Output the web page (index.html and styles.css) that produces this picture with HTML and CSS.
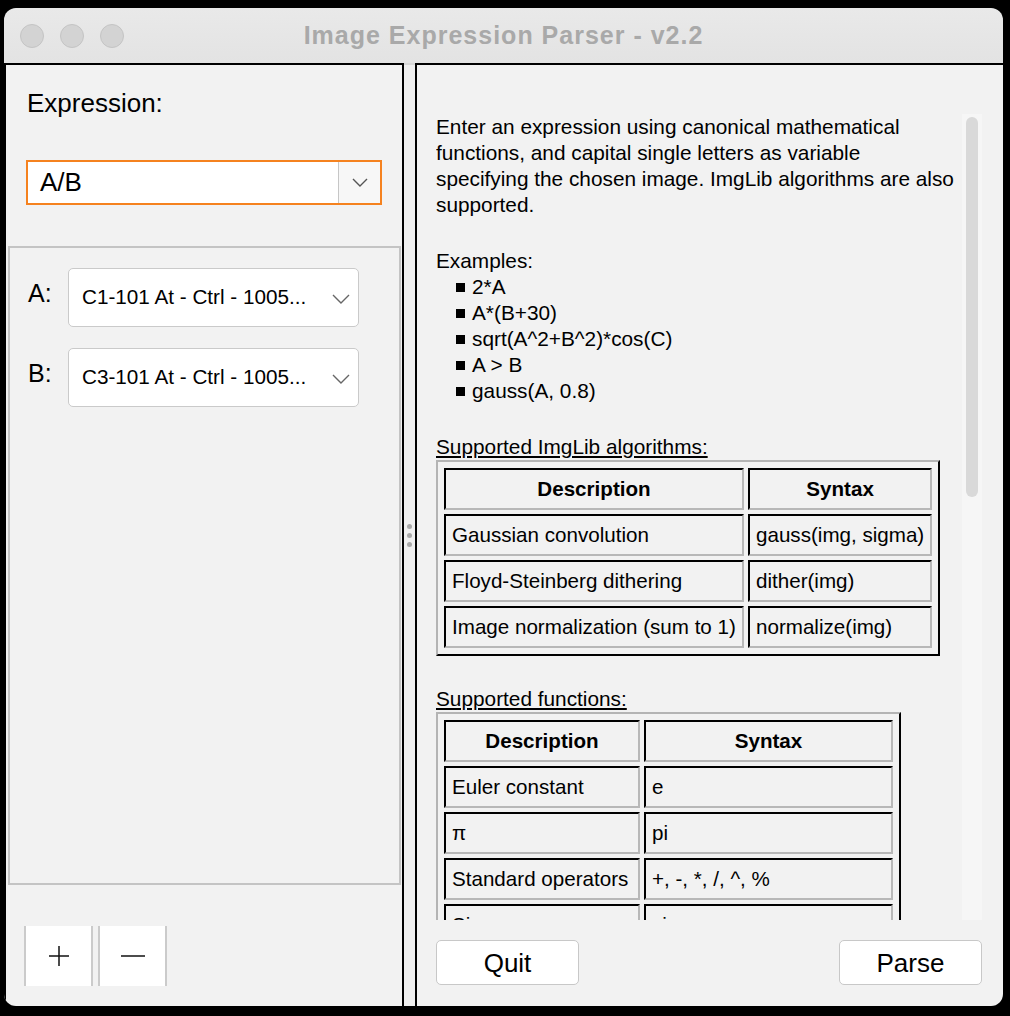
FILE: index.html
```html
<!DOCTYPE html>
<html>
<head>
<meta charset="utf-8">
<link rel="stylesheet" href="styles.css">
</head>
<body>
<div class="window">
  <div class="titlebar">
    <div class="lights"><span class="light"></span><span class="light"></span><span class="light"></span></div>
    <div class="title">Image Expression Parser - v2.2</div>
    <div></div>
  </div>
  <div class="main">
    <div class="left">
      <div class="expr-label">Expression:</div>
      <div class="expr-combo">
        <div class="expr-value">A/B</div>
        <div class="expr-arrow"><svg width="16" height="9" viewBox="0 0 16 9"><polyline points="1,1 8,8 15,1" fill="none" stroke="#555" stroke-width="1.4"/></svg></div>
      </div>
      <div class="vars">
        <div class="var-row">
          <div class="var-label">A:</div>
          <div class="select"><span>C1-101 At - Ctrl - 1005...</span><svg width="18" height="10" viewBox="0 0 18 10"><polyline points="1,1 9,9 17,1" fill="none" stroke="#666" stroke-width="1.4"/></svg></div>
        </div>
        <div class="var-row">
          <div class="var-label">B:</div>
          <div class="select"><span>C3-101 At - Ctrl - 1005...</span><svg width="18" height="10" viewBox="0 0 18 10"><polyline points="1,1 9,9 17,1" fill="none" stroke="#666" stroke-width="1.4"/></svg></div>
        </div>
      </div>
      <div class="pm">
        <button class="pm-btn"><svg width="22" height="22" viewBox="0 0 22 22"><line x1="11" y1="1" x2="11" y2="21" stroke="#111" stroke-width="1.5"/><line x1="1" y1="11" x2="21" y2="11" stroke="#111" stroke-width="1.5"/></svg></button>
        <button class="pm-btn"><svg width="26" height="4" viewBox="0 0 26 4"><line x1="1" y1="2" x2="25" y2="2" stroke="#111" stroke-width="1.5"/></svg></button>
      </div>
    </div>
    <div class="splitter"><span class="dot"></span><span class="dot"></span><span class="dot"></span></div>
    <div class="right">
      <div class="viewport">
        <div class="doc">
          <p class="intro">Enter an expression using canonical mathematical<br>functions, and capital single letters as variable<br>specifying the chosen image. ImgLib algorithms are also<br>supported.</p>
          <p class="para">Examples:</p>
          <ul class="examples">
            <li>2*A</li>
            <li>A*(B+30)</li>
            <li>sqrt(A^2+B^2)*cos(C)</li>
            <li>A &gt; B</li>
            <li>gauss(A, 0.8)</li>
          </ul>
          <p class="section-title">Supported ImgLib algorithms:</p>
          <table class="grid grid-algos">
            <tr><th class="c1">Description</th><th class="c2">Syntax</th></tr>
            <tr><td>Gaussian convolution</td><td>gauss(img, sigma)</td></tr>
            <tr><td>Floyd-Steinberg dithering</td><td>dither(img)</td></tr>
            <tr><td>Image normalization (sum to 1)</td><td>normalize(img)</td></tr>
          </table>
          <p class="section-title">Supported functions:</p>
          <table class="grid grid-funcs">
            <tr><th class="c1">Description</th><th class="c2">Syntax</th></tr>
            <tr><td>Euler constant</td><td>e</td></tr>
            <tr><td>π</td><td>pi</td></tr>
            <tr><td>Standard operators</td><td>+, -, *, /, ^, %</td></tr>
            <tr><td>Sine</td><td>sin</td></tr>
          </table>
        </div>
        <div class="track"><div class="thumb"></div></div>
      </div>
      <div class="actions">
        <button class="btn">Quit</button>
        <button class="btn">Parse</button>
      </div>
    </div>
  </div>
</div>
</body>
</html>
```
FILE: styles.css
```css
* { box-sizing: border-box; }
html, body { margin: 0; padding: 0; background: #000; }
body { font-family: "Liberation Sans", Arial, sans-serif; color: #000; }

.window {
  margin: 8px 0 0 4px;
  width: 999px;
  height: 998px;
  border-radius: 12px;
  overflow: hidden;
  background: #000;
  display: flex;
  flex-direction: column;
}

.titlebar {
  height: 55px;
  flex: none;
  background: linear-gradient(#e9e9e9, #e3e3e3);
  display: grid;
  grid-template-columns: 1fr auto 1fr;
  align-items: center;
}
.lights { display: flex; gap: 16px; padding-left: 16px; }
.light {
  width: 24px; height: 24px; border-radius: 50%;
  background: #d3d3d3; border: 1px solid #c4c4c4;
}
.title {
  font-size: 25px; font-weight: bold; color: #a9a9a9;
  letter-spacing: 1px;
}

.main { flex: 1; display: flex; min-height: 0; }

.left {
  width: 400px; flex: none;
  background: #f2f2f2;
  border-left: 2px solid #000;
  border-top: 2px solid #000;
  border-right: 2px solid #000;
  padding-top: 23px;
  display: flex; flex-direction: column;
}
.expr-label { font-size: 26px; line-height: 30px; margin-left: 21px; }
.expr-combo {
  margin: 42px 20px 0 20px;
  height: 45px;
  border: 2px solid #f5821f;
  display: flex;
  background: #fff;
}
.expr-value { flex: 1; font-size: 26px; line-height: 41px; padding-left: 12px; }
.expr-arrow {
  width: 42px; border-left: 1px solid #c6c6c6; background: #f7f7f7;
  display: flex; align-items: center; justify-content: center;
}

.vars {
  margin: 41px 1px 0 2px;
  height: 639px;
  border: 2px solid #c4c4c4;
  padding: 20px 0 0 18px;
}
.var-row { display: flex; height: 59px; }
.var-row + .var-row { margin-top: 21px; }
.var-label { width: 40px; font-size: 25px; line-height: 30px; margin-top: 10px; }
.select {
  width: 291px; height: 59px;
  border: 1px solid #cacaca; border-radius: 5px; background: #fff;
  display: flex; align-items: center; justify-content: space-between;
  padding: 0 8px 1px 13px;
  font-size: 20.7px;
}
.select svg { margin-top: 3px; }

.pm { margin: 41px 0 0 18px; display: flex; gap: 5px; }
.pm-btn {
  width: 69px; height: 60px; padding: 0;
  background: #fff; border: none;
  border-left: 2px solid #cbcbcb; border-right: 2px solid #cbcbcb;
  display: flex; align-items: center; justify-content: center;
}

.splitter {
  width: 11px; flex: none;
  background: #efefef;
  border-top: 2px solid #d6d6d6;
  display: flex; flex-direction: column; align-items: center; justify-content: center;
  gap: 4px;
}
.dot { width: 5px; height: 5px; border-radius: 50%; background: #a8a8a8; }

.right {
  flex: 1;
  background: #f2f2f2;
  border-left: 2px solid #000;
  border-top: 2px solid #000;
  padding: 49px 21px 0 19px;
}
.viewport { height: 806px; display: flex; }
.doc {
  width: 526px; overflow: hidden;
  font-size: 20.8px; line-height: 26px;
}
.track { width: 20px; background: #f6f6f6; padding: 3px 4px 0 4px; }
.thumb { height: 380px; border-radius: 6px; background: #d9d9d9; }

.doc p { margin: 0; }
.doc .para { margin-top: 30px; }
.examples { margin: 0; padding-left: 20px; list-style: none; }
.examples li { display: flex; align-items: center; }
.examples li::before {
  content: ""; width: 9px; height: 9px; background: #000; margin-right: 7px; flex: none;
}
.doc .section-title { margin-top: 30px; text-decoration: underline; text-underline-offset: 2px; }

.grid {
  border-collapse: separate;
  border-spacing: 4px;
  padding: 2px;
  border-top: 2px solid #b4b4b4;
  border-left: 2px solid #b4b4b4;
  border-right: 2px solid #000;
  border-bottom: 2px solid #000;
  font-size: 20.6px;
  line-height: 26px;
}
.grid th, .grid td {
  box-sizing: content-box;
  padding: 6px;
  border-top: 2px solid #000;
  border-left: 2px solid #000;
  border-right: 2px solid #b8b8b8;
  border-bottom: 2px solid #b8b8b8;
  text-align: left;
  white-space: nowrap;
  overflow: hidden;
}
.grid th { text-align: center; font-weight: bold; }
.grid-algos th.c1 { width: 284px; }
.grid-algos th.c2 { width: 164px; }
.grid-funcs th.c1 { width: 180px; }
.grid-funcs th.c2 { width: 233px; }

.actions { margin-top: 20px; display: flex; justify-content: space-between; }
.btn {
  width: 143px; height: 45px;
  background: #fff; border: 1px solid #c8c8c8; border-radius: 5px;
  font-family: "Liberation Sans", Arial, sans-serif;
  font-size: 26px; line-height: 30px; color: #000; padding: 0;
}
```
